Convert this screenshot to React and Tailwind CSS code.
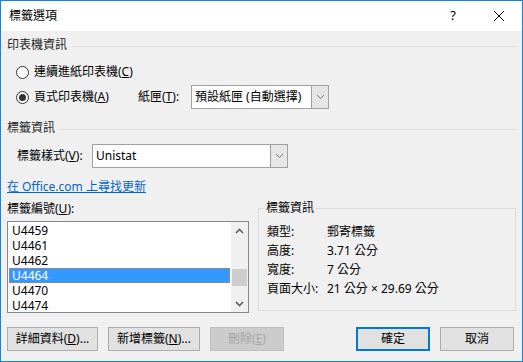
import React from "react";

const font = { fontFamily: '"Noto Sans", "Noto Sans CJK TC", sans-serif' };

const Chevron = ({ up, down, className }) => (
  <svg width="9" height="6" viewBox="0 0 9 6" className={className}>
    {up ? (
      <path d="M1 5 L4.5 1.5 L8 5" fill="none" stroke="#606060" strokeWidth="1.6" />
    ) : (
      <path d="M1 1 L4.5 4.5 L8 1" fill="none" stroke={down ? "#606060" : "#707070"} strokeWidth={down ? "1.6" : "1"} />
    )}
  </svg>
);

const Radio = ({ checked }) => (
  <div className="w-[13px] h-[13px] rounded-full border border-[#333333] bg-white flex items-center justify-center shrink-0">
    {checked && <div className="w-[7px] h-[7px] rounded-full bg-[#333333]" />}
  </div>
);

const GroupHeader = ({ children }) => (
  <div className="flex items-center h-[16px]">
    <span className="text-[12px] leading-[16px] text-[#1e1e1e]">{children}</span>
    <div className="flex-1 h-px bg-[#dcdcdc] ml-[5px] mt-[2px]" />
  </div>
);

const Select = ({ value, width }) => (
  <div className={`flex h-[24px] border border-[#a0a0a0] bg-white ${width}`}>
    <div className="flex-1 flex items-center pl-[3px] text-[12px] text-black">{value}</div>
    <div className="w-[17px] bg-[#e6e6e6] border-l border-[#a0a0a0] flex items-center justify-center">
      <Chevron />
    </div>
  </div>
);

const Button = ({ children, w, disabled, primary }) => (
  <div
    className={`h-[24px] ${w} flex items-center justify-center text-[12px] ${
      disabled
        ? "bg-[#cccccc] border border-[#bfbfbf] text-[#a6a6a6]"
        : primary
        ? "bg-[#e1e1e1] border-2 border-[#0078d7] text-black"
        : "bg-[#e1e1e1] border border-[#adadad] text-black"
    }`}
  >
    {children}
  </div>
);

const items = ["U4459", "U4461", "U4462", "U4464", "U4470", "U4474"];

const info = [
  ["類型:", "郵寄標籤"],
  ["高度:", "3.71 公分"],
  ["寬度:", "7 公分"],
  ["頁面大小:", "21 公分 × 29.69 公分"],
];

export default function App() {
  return (
    <div
      style={font}
      className="w-[523px] h-[362px] border border-[#1883d7] bg-[#f0f0f0] flex flex-col text-black overflow-hidden"
    >
      {/* title bar */}
      <div className="h-[30px] bg-white flex items-center shrink-0">
        <span className="ml-[8px] text-[12px] text-black">標籤選項</span>
        <div className="flex-1" />
        <div className="w-[46px] h-full flex items-center justify-center text-[13px] text-black">?</div>
        <div className="w-[46px] h-full flex items-center justify-center">
          <svg width="10" height="10" viewBox="0 0 10 10">
            <path d="M0 0 L10 10 M10 0 L0 10" stroke="#000" strokeWidth="1" />
          </svg>
        </div>
      </div>

      {/* body */}
      <div className="flex-1 flex flex-col px-[6px]">
        <div className="mt-[6px]">
          <GroupHeader>印表機資訊</GroupHeader>
        </div>

        <div className="mt-[11px] h-[16px] flex items-center pl-[9px]">
          <Radio />
          <span className="ml-[5px] text-[12px]">
            連續進紙印表機(<u>C</u>)
          </span>
        </div>

        <div className="mt-[5px] h-[24px] flex items-center">
          <div className="w-[131px] flex items-center pl-[9px]">
            <Radio checked />
            <span className="ml-[5px] text-[12px]">
              頁式印表機(<u>A</u>)
            </span>
          </div>
          <span className="w-[53px] text-[12px]">
            紙匣(<u>T</u>):
          </span>
          <Select value="預設紙匣 (自動選擇)" width="w-[138px]" />
        </div>

        <div className="mt-[11px]">
          <GroupHeader>標籤資訊</GroupHeader>
        </div>

        <div className="mt-[8px] h-[24px] flex items-center">
          <span className="w-[85px] pl-[10px] text-[12px]">
            標籤樣式(<u>V</u>):
          </span>
          <Select value="Unistat" width="w-[196px]" />
        </div>

        <div className="mt-[11px] h-[16px] flex items-center">
          <span className="text-[12px] text-[#0066cc] underline">在 Office.com 上尋找更新</span>
        </div>

        <div className="mt-[6px] flex gap-[9px]">
          <div className="w-[242px] flex flex-col">
            <div className="h-[16px] flex items-center text-[12px]">
              <span>
                標籤編號(<u>U</u>):
              </span>
            </div>
            <div className="mt-[4px] h-[92px] border border-[#828790] bg-white flex">
              <div className="flex-1 flex flex-col p-px">
                {items.map((it) => (
                  <div
                    key={it}
                    className={`h-[15px] flex items-center pl-[3px] text-[12px] leading-[15px] ${
                      it === "U4464"
                        ? "bg-[#3399ff] text-white outline outline-1 outline-dotted outline-[#e07a20] -outline-offset-1"
                        : "text-black"
                    }`}
                  >
                    {it}
                  </div>
                ))}
              </div>
              <div className="w-[17px] bg-[#f0f0f0] flex flex-col items-center">
                <div className="h-[17px] flex items-center justify-center">
                  <Chevron up />
                </div>
                <div className="h-[30px]" />
                <div className="w-[15px] h-[17px] bg-[#cdcdcd]" />
                <div className="flex-1" />
                <div className="h-[17px] flex items-center justify-center">
                  <Chevron down />
                </div>
              </div>
            </div>
          </div>

          <div className="flex-1 mt-[7px] h-[103px] border border-[#dcdcdc] relative">
            <span className="absolute -top-[9px] left-[5px] px-[2px] bg-[#f0f0f0] text-[12px] leading-[16px]">
              標籤資訊
            </span>
            <div className="pt-[13px] pl-[8px] flex flex-col">
              {info.map(([k, v]) => (
                <div key={k} className="h-[19px] flex items-center text-[12px]">
                  <span className="w-[60px]">{k}</span>
                  <span>{v}</span>
                </div>
              ))}
            </div>
          </div>
        </div>

        <div className="mt-[14px] flex items-center">
          <Button w="w-[91px]">
            詳細資料(<u>D</u>)...
          </Button>
          <div className="w-[10px]" />
          <Button w="w-[92px]">
            新增標籤(<u>N</u>)...
          </Button>
          <div className="w-[10px]" />
          <Button w="w-[74px]" disabled>
            刪除(<u>E</u>)
          </Button>
          <div className="flex-1" />
          <Button w="w-[74px]" primary>
            確定
          </Button>
          <div className="w-[10px]" />
          <Button w="w-[74px]">取消</Button>
          <div className="w-[2px]" />
        </div>
      </div>
    </div>
  );
}
